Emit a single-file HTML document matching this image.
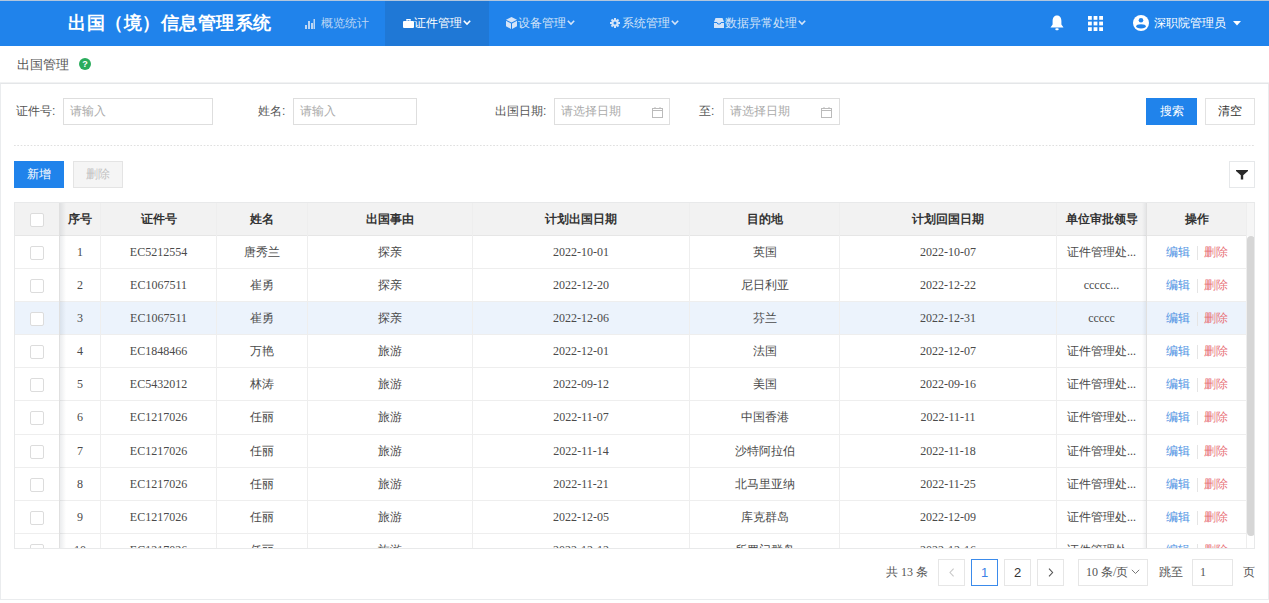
<!DOCTYPE html>
<html><head><meta charset="utf-8">
<style>
*{box-sizing:border-box;margin:0;padding:0}
html,body{width:1269px;height:603px;overflow:hidden;background:#fff;font-family:"Liberation Sans",sans-serif;font-size:12px;color:#333}
.a{position:absolute}
.top{left:0;top:0;width:1269px;height:46px;background:#2083eb;border-top:1px solid #b2c6dd}
.title{left:68px;top:12px;font-weight:bold;font-size:18px;color:#fff;letter-spacing:0.5px;line-height:22px;white-space:nowrap}
.nav{top:1px;height:45px;line-height:44px;font-size:12px;white-space:nowrap}
.act{left:385px;top:1px;width:104px;height:45px;background:#1f78d6}
.crumb{left:17px;top:57px;font-size:13px;color:#555;line-height:16px}
.q{left:79px;top:58px;width:12px;height:12px;border-radius:50%;background:#2aac5c;color:#fff;font-size:9px;font-weight:bold;text-align:center;line-height:12px}
.panel{left:0;top:83px;width:1269px;height:517px;border:1px solid #eaecee;border-top-color:#e4e6e8;box-shadow:0 -1px 0 #f1f2f3}
.lbl{top:104px;font-size:12px;color:#555;line-height:14px;white-space:nowrap}
.inp{top:98px;height:27px;border:1px solid #dedede;background:#fff;color:#aaa;font-size:12px;line-height:25px;padding-left:6px;white-space:nowrap}
.btn{height:27px;line-height:25px;text-align:center;font-size:12px;border:1px solid #e2e2e2;background:#fff;color:#333;white-space:nowrap}
.btn.pri{background:#2083eb;border-color:#2083eb;color:#fff}
.btn.dis{background:#f5f5f5;color:#c2c2c2;border-color:#e4e4e4}
.dash{left:14px;top:145px;width:1241px;height:1px;background-image:linear-gradient(90deg,#e0e0e0 60%,transparent 60%);background-size:3.33px 1px}
.tbl{left:0;top:0;width:1269px;height:549px;clip-path:inset(202px 14px 0px 14px)}
.tbl>div,.tbl>span{position:absolute}
.hbg{background:#f2f2f2}
.hlbg{background:#ecf3fc}
.hl{left:15px;width:1231px;height:1px;background:#eeeeee}
.hl.hd{background:#e6e6e6}
.vl{top:203px;height:346px;width:1px;background:#eeeeee}
.tframe{left:14px;top:202px;width:1241px;height:347px;border:1px solid #e8e9ea}
.c{height:32px;line-height:32px;text-align:center;font-family:"Liberation Serif",serif;font-size:12px;color:#4a4a4a;white-space:nowrap}
.c.th{font-family:"Liberation Sans",sans-serif;font-weight:bold;color:#333}
.c.op{font-family:"Liberation Sans",sans-serif}
.cb{width:14px;height:14px;border:1px solid #dcdcdc;border-radius:2px;background:#fff}
.ed{color:#4a90e2}.del{color:#e8727a}.sep{display:inline-block;width:1px;height:14px;background:#e5e5e5;margin:0 6px 0 7px;vertical-align:middle}
.shl{top:203px;left:60px;width:6px;height:346px;background:linear-gradient(90deg,rgba(0,20,40,0.08),rgba(0,20,40,0))}
.shr{top:203px;left:1142px;width:4px;height:346px;background:linear-gradient(270deg,rgba(0,20,40,0.06),rgba(0,20,40,0))}
.thumb{left:1247px;top:236px;width:8px;height:300px;background:#d6d6d6;border-radius:4px 4px 4px 4px}
.pg{top:559px;width:27px;height:27px;border:1px solid #e6e6e6;background:#fff;text-align:center;line-height:25px;font-size:13px;color:#333}
.pgt{top:564px;font-family:"Liberation Serif",serif;font-size:12px;color:#555;line-height:16px;white-space:nowrap}
</style></head><body>
<div class="a top"></div>
<div class="a act"></div>
<div class="a title">出国（境）信息管理系统</div>
<svg class="a" style="left:305px;top:18px" width="10" height="11" viewBox="0 0 10 11" fill="#bcd6f4"><rect x="0" y="7" width="2" height="4"/><rect x="3" y="3" width="2" height="8"/><rect x="6" y="5" width="2" height="6"/><rect x="8.5" y="1" width="1.5" height="10"/></svg>
<div class="a nav" style="left:321px;color:#bcd6f4">概览统计</div>
<svg class="a" style="left:403px;top:19px" width="11" height="9" viewBox="0 0 11 9" fill="#fff"><rect x="0" y="2" width="11" height="7" rx="1"/><rect x="3.5" y="0" width="4" height="1.3"/><rect x="3.5" y="0" width="1" height="2.5"/><rect x="6.5" y="0" width="1" height="2.5"/></svg>
<div class="a nav" style="left:414px;color:#fff">证件管理</div>
<svg class="a" style="left:463px;top:20px" width="8" height="6" viewBox="0 0 8 6" fill="none"><path d="M0.8 0.8 L4 4 L7.2 0.8" fill="none" stroke="#fff" stroke-width="1.6"/></svg>
<svg class="a" style="left:506px;top:17px" width="11" height="12" viewBox="0 0 11 12" fill="#d4e4f8"><path d="M5.5 0 L11 2.8 L5.5 5.6 L0 2.8Z"/><path d="M0 3.8 L5 6.4 L5 12 L0 9.2Z"/><path d="M11 3.8 L6 6.4 L6 12 L11 9.2Z"/></svg>
<div class="a nav" style="left:518px;color:#d4e4f8">设备管理</div>
<svg class="a" style="left:567px;top:20px" width="8" height="6" viewBox="0 0 8 6" fill="none"><path d="M0.8 0.8 L4 4 L7.2 0.8" fill="none" stroke="#d4e4f8" stroke-width="1.6"/></svg>
<svg class="a" style="left:610px;top:18px" width="10" height="10" viewBox="0 0 10 10" fill="#d4e4f8"><circle cx="5" cy="5" r="3.6"/><g stroke="#d4e4f8" stroke-width="2"><line x1="5" y1="0" x2="5" y2="10"/><line x1="0" y1="5" x2="10" y2="5"/><line x1="1.5" y1="1.5" x2="8.5" y2="8.5"/><line x1="8.5" y1="1.5" x2="1.5" y2="8.5"/></g><circle cx="5" cy="5" r="1.5" fill="#2083eb"/></svg>
<div class="a nav" style="left:622px;color:#d4e4f8">系统管理</div>
<svg class="a" style="left:671px;top:20px" width="8" height="6" viewBox="0 0 8 6" fill="none"><path d="M0.8 0.8 L4 4 L7.2 0.8" fill="none" stroke="#d4e4f8" stroke-width="1.6"/></svg>
<svg class="a" style="left:714px;top:18px" width="10" height="10" viewBox="0 0 10 10" fill="#d4e4f8"><path d="M1.5 0 H8.5 L10 4 V10 H0 V4 Z"/><path d="M0 4.5 H3 L3.8 6 H6.2 L7 4.5 H10" fill="none" stroke="#2083eb" stroke-width="1"/></svg>
<div class="a nav" style="left:725px;color:#d4e4f8">数据异常处理</div>
<svg class="a" style="left:798px;top:20px" width="8" height="6" viewBox="0 0 8 6" fill="none"><path d="M0.8 0.8 L4 4 L7.2 0.8" fill="none" stroke="#d4e4f8" stroke-width="1.6"/></svg>
<svg class="a" style="left:1050px;top:15px" width="14" height="16" viewBox="0 0 14 16" fill="#fff"><path d="M7 0.5 C3.8 0.5 2.6 3 2.6 6 V9.5 L0.5 12.5 H13.5 L11.4 9.5 V6 C11.4 3 10.2 0.5 7 0.5Z"/><rect x="5.3" y="13.3" width="3.4" height="2" rx="1"/></svg>
<svg class="a" style="left:1088px;top:16px" width="15" height="15" viewBox="0 0 15 15" fill="#fff"><rect x="0.0" y="0.0" width="3.8" height="3.8"/><rect x="5.6" y="0.0" width="3.8" height="3.8"/><rect x="11.2" y="0.0" width="3.8" height="3.8"/><rect x="0.0" y="5.6" width="3.8" height="3.8"/><rect x="5.6" y="5.6" width="3.8" height="3.8"/><rect x="11.2" y="5.6" width="3.8" height="3.8"/><rect x="0.0" y="11.2" width="3.8" height="3.8"/><rect x="5.6" y="11.2" width="3.8" height="3.8"/><rect x="11.2" y="11.2" width="3.8" height="3.8"/></svg>
<svg class="a" style="left:1133px;top:15px" width="16" height="16" viewBox="0 0 16 16" fill="#fff"><circle cx="8" cy="8" r="8"/><circle cx="8" cy="5.2" r="2.3" fill="#2083eb"/><ellipse cx="8" cy="11.3" rx="4.8" ry="2.1" fill="#2083eb"/></svg>
<div class="a nav" style="left:1154px;color:#fff">深职院管理员</div>
<svg class="a" style="left:1233px;top:21px" width="8" height="5" viewBox="0 0 8 5" fill="#fff"><path d="M0 0 H8 L4 4.5Z"/></svg>
<div class="a crumb">出国管理</div>
<div class="a q">?</div>
<div class="a panel"></div>
<div class="a lbl" style="left:16px">证件号:</div>
<div class="a inp" style="left:63px;width:150px">请输入</div>
<div class="a lbl" style="left:258px">姓名:</div>
<div class="a inp" style="left:293px;width:124px">请输入</div>
<div class="a lbl" style="left:495px">出国日期:</div>
<div class="a inp" style="left:554px;width:116px">请选择日期</div>
<div class="a lbl" style="left:699px">至:</div>
<div class="a inp" style="left:723px;width:117px">请选择日期</div>
<svg class="a" style="left:652px;top:107px" width="11" height="11" viewBox="0 0 11 11" fill="none"><rect x="0.5" y="1.5" width="10" height="9" fill="none" stroke="#bbb" stroke-width="1"/><line x1="0.5" y1="3.5" x2="10.5" y2="3.5" stroke="#bbb"/><line x1="3" y1="0" x2="3" y2="2" stroke="#bbb"/><line x1="8" y1="0" x2="8" y2="2" stroke="#bbb"/></svg>
<svg class="a" style="left:821px;top:107px" width="11" height="11" viewBox="0 0 11 11" fill="none"><rect x="0.5" y="1.5" width="10" height="9" fill="none" stroke="#bbb" stroke-width="1"/><line x1="0.5" y1="3.5" x2="10.5" y2="3.5" stroke="#bbb"/><line x1="3" y1="0" x2="3" y2="2" stroke="#bbb"/><line x1="8" y1="0" x2="8" y2="2" stroke="#bbb"/></svg>
<div class="a btn pri" style="left:1146px;top:98px;width:51px">搜索</div>
<div class="a btn" style="left:1205px;top:98px;width:50px">清空</div>
<div class="a dash"></div>
<div class="a btn pri" style="left:14px;top:161px;width:50px">新增</div>
<div class="a btn dis" style="left:73px;top:161px;width:50px">删除</div>
<div class="a btn" style="left:1229px;top:161px;width:26px;border-color:#e6e8ea"></div>
<svg class="a" style="left:1236px;top:170px" width="12" height="10" viewBox="0 0 12 10" fill="#2a2a2a"><path d="M0 0 H12 V1 L7.2 5.2 V9.5 H4.8 V5.2 L0 1Z"/></svg>
<div class="a tbl">
<div class="hbg" style="left:15px;top:203px;width:1231px;height:33px"></div>
<div style="left:1247px;top:203px;width:8px;height:33px;background:#f6f6f6"></div>
<div class="hlbg" style="left:15px;top:302px;width:1231px;height:32px"></div>
<div class="hl hd" style="top:235px"></div>
<div class="hl" style="top:268px"></div>
<div class="hl" style="top:301px"></div>
<div class="hl" style="top:334px"></div>
<div class="hl" style="top:367px"></div>
<div class="hl" style="top:400px"></div>
<div class="hl" style="top:434px"></div>
<div class="hl" style="top:467px"></div>
<div class="hl" style="top:500px"></div>
<div class="hl" style="top:533px"></div>
<div class="vl" style="left:59px;background:#e0e0e0"></div>
<div class="vl" style="left:100px"></div>
<div class="vl" style="left:216px"></div>
<div class="vl" style="left:307px"></div>
<div class="vl" style="left:472px"></div>
<div class="vl" style="left:689px"></div>
<div class="vl" style="left:839px"></div>
<div class="vl" style="left:1056px"></div>
<div class="vl" style="left:1146px;background:#e0e0e0"></div>
<div class="vl" style="left:1246px"></div>
<span class="cb" style="left:30px;top:213px"></span>
<div class="c th" style="left:60px;top:203px;width:40px">序号</div>
<div class="c th" style="left:101px;top:203px;width:115px">证件号</div>
<div class="c th" style="left:217px;top:203px;width:90px">姓名</div>
<div class="c th" style="left:308px;top:203px;width:164px">出国事由</div>
<div class="c th" style="left:473px;top:203px;width:216px">计划出国日期</div>
<div class="c th" style="left:690px;top:203px;width:149px">目的地</div>
<div class="c th" style="left:840px;top:203px;width:216px">计划回国日期</div>
<div class="c th" style="left:1057px;top:203px;width:89px">单位审批领导</div>
<div class="c th" style="left:1147px;top:203px;width:99px">操作</div>
<span class="cb" style="left:30px;top:246px"></span>
<div class="c" style="left:60px;top:236px;width:40px">1</div>
<div class="c" style="left:101px;top:236px;width:115px">EC5212554</div>
<div class="c" style="left:217px;top:236px;width:90px">唐秀兰</div>
<div class="c" style="left:308px;top:236px;width:164px">探亲</div>
<div class="c" style="left:473px;top:236px;width:216px">2022-10-01</div>
<div class="c" style="left:690px;top:236px;width:149px">英国</div>
<div class="c" style="left:840px;top:236px;width:216px">2022-10-07</div>
<div class="c" style="left:1057px;top:236px;width:89px">证件管理处...</div>
<div class="c op" style="left:1147px;top:236px;width:99px"><span class="ed">编辑</span><span class="sep"></span><span class="del">删除</span></div>
<span class="cb" style="left:30px;top:279px"></span>
<div class="c" style="left:60px;top:269px;width:40px">2</div>
<div class="c" style="left:101px;top:269px;width:115px">EC1067511</div>
<div class="c" style="left:217px;top:269px;width:90px">崔勇</div>
<div class="c" style="left:308px;top:269px;width:164px">探亲</div>
<div class="c" style="left:473px;top:269px;width:216px">2022-12-20</div>
<div class="c" style="left:690px;top:269px;width:149px">尼日利亚</div>
<div class="c" style="left:840px;top:269px;width:216px">2022-12-22</div>
<div class="c" style="left:1057px;top:269px;width:89px">ccccc...</div>
<div class="c op" style="left:1147px;top:269px;width:99px"><span class="ed">编辑</span><span class="sep"></span><span class="del">删除</span></div>
<span class="cb" style="left:30px;top:312px"></span>
<div class="c" style="left:60px;top:302px;width:40px">3</div>
<div class="c" style="left:101px;top:302px;width:115px">EC1067511</div>
<div class="c" style="left:217px;top:302px;width:90px">崔勇</div>
<div class="c" style="left:308px;top:302px;width:164px">探亲</div>
<div class="c" style="left:473px;top:302px;width:216px">2022-12-06</div>
<div class="c" style="left:690px;top:302px;width:149px">芬兰</div>
<div class="c" style="left:840px;top:302px;width:216px">2022-12-31</div>
<div class="c" style="left:1057px;top:302px;width:89px">ccccc</div>
<div class="c op" style="left:1147px;top:302px;width:99px"><span class="ed">编辑</span><span class="sep"></span><span class="del">删除</span></div>
<span class="cb" style="left:30px;top:345px"></span>
<div class="c" style="left:60px;top:335px;width:40px">4</div>
<div class="c" style="left:101px;top:335px;width:115px">EC1848466</div>
<div class="c" style="left:217px;top:335px;width:90px">万艳</div>
<div class="c" style="left:308px;top:335px;width:164px">旅游</div>
<div class="c" style="left:473px;top:335px;width:216px">2022-12-01</div>
<div class="c" style="left:690px;top:335px;width:149px">法国</div>
<div class="c" style="left:840px;top:335px;width:216px">2022-12-07</div>
<div class="c" style="left:1057px;top:335px;width:89px">证件管理处...</div>
<div class="c op" style="left:1147px;top:335px;width:99px"><span class="ed">编辑</span><span class="sep"></span><span class="del">删除</span></div>
<span class="cb" style="left:30px;top:378px"></span>
<div class="c" style="left:60px;top:368px;width:40px">5</div>
<div class="c" style="left:101px;top:368px;width:115px">EC5432012</div>
<div class="c" style="left:217px;top:368px;width:90px">林涛</div>
<div class="c" style="left:308px;top:368px;width:164px">旅游</div>
<div class="c" style="left:473px;top:368px;width:216px">2022-09-12</div>
<div class="c" style="left:690px;top:368px;width:149px">美国</div>
<div class="c" style="left:840px;top:368px;width:216px">2022-09-16</div>
<div class="c" style="left:1057px;top:368px;width:89px">证件管理处...</div>
<div class="c op" style="left:1147px;top:368px;width:99px"><span class="ed">编辑</span><span class="sep"></span><span class="del">删除</span></div>
<span class="cb" style="left:30px;top:411px"></span>
<div class="c" style="left:60px;top:401px;width:40px">6</div>
<div class="c" style="left:101px;top:401px;width:115px">EC1217026</div>
<div class="c" style="left:217px;top:401px;width:90px">任丽</div>
<div class="c" style="left:308px;top:401px;width:164px">旅游</div>
<div class="c" style="left:473px;top:401px;width:216px">2022-11-07</div>
<div class="c" style="left:690px;top:401px;width:149px">中国香港</div>
<div class="c" style="left:840px;top:401px;width:216px">2022-11-11</div>
<div class="c" style="left:1057px;top:401px;width:89px">证件管理处...</div>
<div class="c op" style="left:1147px;top:401px;width:99px"><span class="ed">编辑</span><span class="sep"></span><span class="del">删除</span></div>
<span class="cb" style="left:30px;top:445px"></span>
<div class="c" style="left:60px;top:435px;width:40px">7</div>
<div class="c" style="left:101px;top:435px;width:115px">EC1217026</div>
<div class="c" style="left:217px;top:435px;width:90px">任丽</div>
<div class="c" style="left:308px;top:435px;width:164px">旅游</div>
<div class="c" style="left:473px;top:435px;width:216px">2022-11-14</div>
<div class="c" style="left:690px;top:435px;width:149px">沙特阿拉伯</div>
<div class="c" style="left:840px;top:435px;width:216px">2022-11-18</div>
<div class="c" style="left:1057px;top:435px;width:89px">证件管理处...</div>
<div class="c op" style="left:1147px;top:435px;width:99px"><span class="ed">编辑</span><span class="sep"></span><span class="del">删除</span></div>
<span class="cb" style="left:30px;top:478px"></span>
<div class="c" style="left:60px;top:468px;width:40px">8</div>
<div class="c" style="left:101px;top:468px;width:115px">EC1217026</div>
<div class="c" style="left:217px;top:468px;width:90px">任丽</div>
<div class="c" style="left:308px;top:468px;width:164px">旅游</div>
<div class="c" style="left:473px;top:468px;width:216px">2022-11-21</div>
<div class="c" style="left:690px;top:468px;width:149px">北马里亚纳</div>
<div class="c" style="left:840px;top:468px;width:216px">2022-11-25</div>
<div class="c" style="left:1057px;top:468px;width:89px">证件管理处...</div>
<div class="c op" style="left:1147px;top:468px;width:99px"><span class="ed">编辑</span><span class="sep"></span><span class="del">删除</span></div>
<span class="cb" style="left:30px;top:511px"></span>
<div class="c" style="left:60px;top:501px;width:40px">9</div>
<div class="c" style="left:101px;top:501px;width:115px">EC1217026</div>
<div class="c" style="left:217px;top:501px;width:90px">任丽</div>
<div class="c" style="left:308px;top:501px;width:164px">旅游</div>
<div class="c" style="left:473px;top:501px;width:216px">2022-12-05</div>
<div class="c" style="left:690px;top:501px;width:149px">库克群岛</div>
<div class="c" style="left:840px;top:501px;width:216px">2022-12-09</div>
<div class="c" style="left:1057px;top:501px;width:89px">证件管理处...</div>
<div class="c op" style="left:1147px;top:501px;width:99px"><span class="ed">编辑</span><span class="sep"></span><span class="del">删除</span></div>
<span class="cb" style="left:30px;top:544px"></span>
<div class="c" style="left:60px;top:534px;width:40px">10</div>
<div class="c" style="left:101px;top:534px;width:115px">EC1217026</div>
<div class="c" style="left:217px;top:534px;width:90px">任丽</div>
<div class="c" style="left:308px;top:534px;width:164px">旅游</div>
<div class="c" style="left:473px;top:534px;width:216px">2022-12-12</div>
<div class="c" style="left:690px;top:534px;width:149px">所罗门群岛</div>
<div class="c" style="left:840px;top:534px;width:216px">2022-12-16</div>
<div class="c" style="left:1057px;top:534px;width:89px">证件管理处...</div>
<div class="c op" style="left:1147px;top:534px;width:99px"><span class="ed">编辑</span><span class="sep"></span><span class="del">删除</span></div>
<div class="shl"></div><div class="shr"></div>
<div class="thumb"></div>
</div>
<div class="a tframe"></div>
<div class="a pgt" style="left:886px">共 13 条</div>
<div class="a pg" style="left:938px"></div>
<svg class="a" style="left:949px;top:568px" width="6" height="9" viewBox="0 0 6 9" fill="none"><path d="M4.6 0.6 L1 4.5 L4.6 8.4" fill="none" stroke="#c8c8c8" stroke-width="1.1"/></svg>
<div class="a pg" style="left:971px;border-color:#3b8beb;color:#3b82e6">1</div>
<div class="a pg" style="left:1004px">2</div>
<div class="a pg" style="left:1037px"></div>
<svg class="a" style="left:1048px;top:568px" width="6" height="9" viewBox="0 0 6 9" fill="none"><path d="M1 0.6 L4.6 4.5 L1 8.4" fill="none" stroke="#555" stroke-width="1.1"/></svg>
<div class="a pg" style="left:1078px;width:70px"></div>
<div class="a pgt" style="left:1086px">10 条/页</div>
<svg class="a" style="left:1131px;top:569px" width="9" height="6" viewBox="0 0 9 6" fill="none"><path d="M0.8 0.8 L4.5 4.5 L8.2 0.8" fill="none" stroke="#777" stroke-width="1"/></svg>
<div class="a pgt" style="left:1159px">跳至</div>
<div class="a pg" style="left:1192px;width:41px"></div>
<div class="a pgt" style="left:1200px">1</div>
<div class="a pgt" style="left:1243px">页</div>
</body></html>
